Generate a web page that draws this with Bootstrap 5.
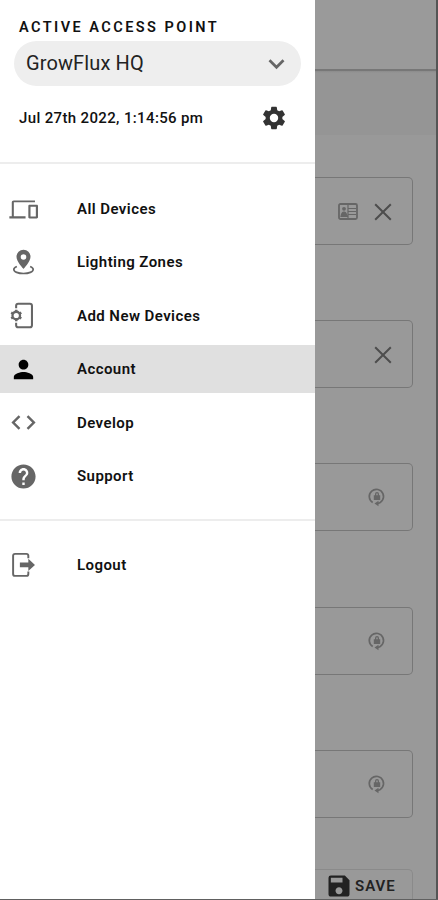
<!DOCTYPE html>
<html lang="en">
<head>
<meta charset="utf-8">
<meta name="viewport" content="width=device-width, initial-scale=1">
<title>GrowFlux</title>
<link href="https://cdn.jsdelivr.net/npm/bootstrap@5.3.0/dist/css/bootstrap.min.css" rel="stylesheet">
<style>
body{font-family:Roboto,sans-serif;color:#111;background:#fff}
.screen{height:900px;border-bottom:1px solid #606060}
.drawer{width:315px;background:#fff}
.drawer-head{height:164px;padding:19px 14px 0;border-bottom:2px solid #ededed}
.eyebrow{font-size:14.5px;line-height:17px;font-weight:600;letter-spacing:2.45px;padding-left:5px}
.picker{width:287px;height:45px;margin-top:5px;padding:0 13px 2px 12px;background:#eee;font-size:20px;letter-spacing:.12px;color:#222;border:0}
.clock{height:28px;margin-top:18px;padding:0 13px 0 5px;font-size:15px;font-weight:500;letter-spacing:.36px}
.menu{padding-top:21px;gap:5.45px}
.menu-item{height:48px;padding-left:9px;font-size:15px;font-weight:600;letter-spacing:.43px;color:#111;text-decoration:none}
.menu-item svg{width:29px;height:29px;margin-right:39px;color:#666;flex:none}
.menu-item.active{background:#e0e0e0}
.menu-item.active svg{color:#000}
.rule{height:2px;margin-top:19px;background:#ededed}
.menu-foot{padding-top:20px}
.backdrop{background:#999;border-right:2px solid #555;min-width:0}
.topbar{height:69px;background:#9a9a9a}
.topbar-edge{height:4px;background:linear-gradient(#777,#777 40%,#8d8d8d 60%,#959595)}
.band{height:62px;background:#959595}
.fields{padding:42px 23px 0 0;gap:75.2px}
.field{height:68px;border:1.5px solid #777;border-left:0;border-radius:0 5px 5px 0;color:#4d4d4d;padding:1px 20px 0 0}
.field.secret{padding:0 26px 0 0;color:#666}
.save{height:30px;width:98px;margin-top:51px;border:1px solid #8a8a8a;border-left:0;border-bottom:0;border-radius:0 5px 0 0;background:#999;color:#222;font-size:15px;font-weight:600;letter-spacing:1px;padding:4px 0 0 10px}
.save svg{margin-right:2px}
</style>
<script src="https://cdn.jsdelivr.net/npm/bootstrap@5.3.0/dist/js/bootstrap.bundle.min.js"></script>
</head>
<body>
<svg class="d-none">
<symbol id="lock-reset" viewBox="0 0 18 20"><path d="M4.700 15.500A7.100 7.100 0 1 1 9 16.500" fill="none" stroke="currentColor" stroke-width="1.700"/><path d="M10.500 13.700v5.600L6.500 16.500zM5.800 8.200H7V7a2 2 0 0 1 4 0v1.200h1.200V13H5.800z" fill="currentColor"/><path d="M8.300 8.200V7a.7.7 0 0 1 1.400 0v1.200z" fill="#999"/></symbol>
<symbol id="cross" viewBox="0 0 18 18"><path d="M1.200 1.200l15.600 15.600M16.800 1.200L1.200 16.800" fill="none" stroke="currentColor" stroke-width="2"/></symbol>
</svg>
<div class="screen d-flex overflow-hidden">
<aside class="drawer flex-shrink-0">
<div class="drawer-head">
<div class="eyebrow text-nowrap">ACTIVE ACCESS POINT</div>
<button type="button" class="picker rounded-pill d-flex align-items-center justify-content-between"><span>GrowFlux HQ</span><svg width="22" height="22" viewBox="0 0 22 22"><path d="M3.500 8.300l7 7 7-7" fill="none" stroke="#666" stroke-width="2.700"/></svg></button>
<div class="clock d-flex align-items-center justify-content-between text-nowrap"><span>Jul 27th 2022, 1:14:56 pm</span>
<svg width="28" height="28" viewBox="0 0 24 24" fill="#333"><path d="M19.140 12.940c.04-.3.060-.61.060-.94s-.02-.64-.07-.94l2.030-1.580a.49.49 0 0 0 .12-.61l-1.920-3.320a.49.49 0 0 0-.59-.22l-2.390.96c-.5-.38-1.030-.7-1.620-.94l-.36-2.540a.48.48 0 0 0-.48-.41h-3.840a.47.47 0 0 0-.47.41l-.36 2.540c-.59.24-1.130.57-1.620.94l-2.390-.96a.48.48 0 0 0-.59.22L2.740 8.870a.48.48 0 0 0 .12.61l2.030 1.580c-.05.3-.09.63-.09.94s.02.640.07.940l-2.030 1.580a.49.49 0 0 0-.12.610l1.920 3.320c.12.220.37.290.59.220l2.390-.96c.5.380 1.030.7 1.620.940l.36 2.540c.05.240.24.410.48.410h3.840c.24 0 .44-.17.470-.41l.36-2.540c.59-.24 1.130-.56 1.620-.94l2.390.96c.22.080.47 0 .59-.22l1.920-3.320a.47.47 0 0 0-.12-.61zM12 15.600A3.600 3.600 0 1 1 12 8.400a3.600 3.600 0 0 1 0 7.200z"/></svg></div>
</div>
<nav class="menu d-flex flex-column">
<a href="#" class="menu-item d-flex align-items-center"><svg viewBox="0 0 24 24" fill="currentColor"><path d="M4 6h17.500V4.500H4c-1.100 0-1.700.8-1.700 1.600V17.500H.3v2h13.400v-2H4zM23 8h-6c-.55 0-1 .45-1 1v9.500c0 .55.45 1 1 1h6c.55 0 1-.45 1-1V9c0-.55-.45-1-1-1zm-.8 9.700h-4.400V9.800h4.400z"/></svg>All Devices</a>
<a href="#" class="menu-item d-flex align-items-center"><svg viewBox="0 0 24 24"><path d="M12 1.500a5.800 5.800 0 0 0-5.800 5.800C6.200 11.500 12 17.300 12 17.300s5.800-5.800 5.800-10A5.800 5.800 0 0 0 12 1.500zm0 3.700a2.300 2.300 0 1 1 0 4.600 2.300 2.300 0 0 1 0-4.600z" fill="currentColor"/><path d="M6.500 15.300c-1.500.6-2.500 1.400-2.500 2.400 0 2 3.600 3.400 8 3.400s8-1.400 8-3.400c0-1-1-1.800-2.500-2.400" fill="none" stroke="currentColor" stroke-width="1.400"/></svg>Lighting Zones</a>
<a href="#" class="menu-item d-flex align-items-center"><svg viewBox="0 0 24 24"><path d="M5.900 6V4q0-1.700 1.700-1.700h9.700q1.700 0 1.700 1.700v16q0 1.700-1.700 1.700H7.600q-1.700 0-1.700-1.700v-2" fill="none" stroke="currentColor" stroke-width="1.700"/><circle cx="6" cy="12" r="3.100" fill="none" stroke="currentColor" stroke-width="1.900"/><path d="M6 7.200v2M6 14.800v2M1.800 9.600l1.800 1M8.400 13.400l1.800 1M1.800 14.400l1.800-1M8.400 10.600l1.800-1" fill="none" stroke="currentColor" stroke-width="2"/></svg>Add New Devices</a>
<a href="#" class="menu-item active d-flex align-items-center"><svg viewBox="0 0 24 24" fill="currentColor"><path d="M12 12c2.210 0 4-1.790 4-4s-1.790-4-4-4-4 1.790-4 4 1.790 4 4 4zm0 2c-2.670 0-8 1.340-8 4v2h16v-2c0-2.660-5.330-4-8-4z"/></svg>Account</a>
<a href="#" class="menu-item d-flex align-items-center"><svg viewBox="0 0 24 24" fill="currentColor"><path d="M9.400 16.600L4.800 12l4.600-4.600L8 6l-6 6 6 6 1.400-1.400zm5.200 0l4.600-4.600-4.600-4.600L16 6l6 6-6 6-1.400-1.400z"/></svg>Develop</a>
<a href="#" class="menu-item d-flex align-items-center"><svg viewBox="0 0 24 24" fill="currentColor"><path d="M12 2C6.480 2 2 6.480 2 12s4.480 10 10 10 10-4.480 10-10S17.520 2 12 2zm1 17h-2v-2h2v2zm2.070-7.750l-.9.920C13.450 12.900 13 13.500 13 15h-2v-.5c0-1.100.45-2.100 1.170-2.830l1.240-1.260c.37-.36.590-.86.590-1.410 0-1.100-.9-2-2-2s-2 .9-2 2H8c0-2.210 1.790-4 4-4s4 1.790 4 4c0 .88-.36 1.680-.93 2.250z"/></svg>Support</a>
</nav>
<div class="rule"></div>
<nav class="menu menu-foot d-flex flex-column">
<a href="#" class="menu-item d-flex align-items-center"><svg viewBox="0 0 24 24"><path d="M16 6V4q0-1.600-1.600-1.600H5q-1.600 0-1.600 1.600v15q0 1.600 1.600 1.600h9.400q1.600 0 1.600-1.600v-2" fill="none" stroke="currentColor" stroke-width="1.600"/><path d="M9 9.600h7V6.500l5.500 5-5.500 5v-3.100H9z" fill="currentColor"/></svg>Logout</a>
</nav>
</aside>
<main class="backdrop flex-grow-1">
<div class="topbar"></div><div class="topbar-edge"></div><div class="band"></div>
<div class="fields d-flex flex-column">
<div class="field d-flex align-items-center justify-content-end"><svg width="20" height="17" viewBox="0 0 20 17" class="me-3"><rect x="1" y="1" width="18" height="15" rx="1.500" fill="none" stroke="#666" stroke-width="1.800"/><circle cx="6" cy="5.800" r="1.900" fill="#666"/><path d="M3 13.500c.5-3 1-4.500 3-4.500s2.500 1.500 3 4.500zM10 2v13M10 5.500h8M10 8.500h8M10 11.500h8" fill="#666" stroke="#666" stroke-width="1.200"/></svg><svg width="18" height="18"><use href="#cross"/></svg></div>
<div class="field d-flex align-items-center justify-content-end"><svg width="18" height="18"><use href="#cross"/></svg></div>
<div class="field secret d-flex align-items-center justify-content-end"><svg width="18" height="20"><use href="#lock-reset"/></svg></div>
<div class="field secret d-flex align-items-center justify-content-end"><svg width="18" height="20"><use href="#lock-reset"/></svg></div>
<div class="field secret d-flex align-items-center justify-content-end"><svg width="18" height="20"><use href="#lock-reset"/></svg></div>
</div>
<button type="button" class="save d-flex align-items-center"><svg width="28" height="28" viewBox="0 0 24 24" fill="currentColor" class="flex-shrink-0"><path d="M17 3H5a2 2 0 0 0-2 2v14c0 1.100.9 2 2 2h14c1.100 0 2-.9 2-2V7l-4-4zm-5 16c-1.660 0-3-1.340-3-3s1.340-3 3-3 3 1.340 3 3-1.340 3-3 3zm3-10H5V5h10v4z"/></svg>SAVE</button>
</main>
</div>
</body>
</html>
